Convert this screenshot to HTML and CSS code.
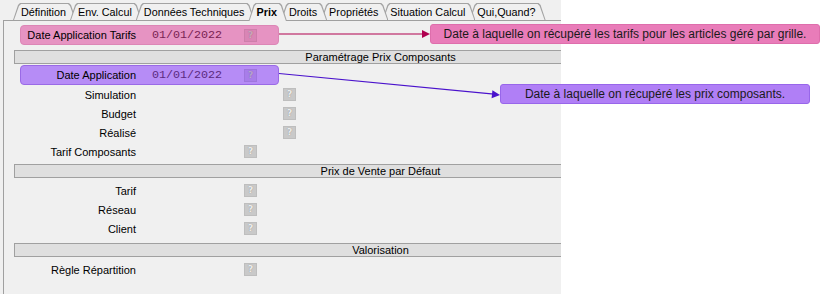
FILE: index.html
```html
<!DOCTYPE html>
<html lang="fr">
<head>
<meta charset="utf-8">
<title>Prix</title>
<link rel="stylesheet" href="styles.css">
</head>
<body>
<div class="screen">
  <div class="window">
    <div class="tabs">
      <div class="tab z1"><span>Définition</span></div>
      <div class="tab z2"><span>Env. Calcul</span></div>
      <div class="tab z3"><span>Données Techniques</span></div>
      <div class="tab active"><span>Prix</span></div>
      <div class="tab z8"><span>Droits</span></div>
      <div class="tab z7"><span>Propriétés</span></div>
      <div class="tab z6"><span>Situation Calcul</span></div>
      <div class="tab z5"><span>Qui,Quand?</span></div>
    </div>
    <div class="panel">
      <div class="row hl hl-pink gap-top4">
        <span class="lbl">Date Application Tarifs</span><span class="val">01/01/2022</span><span class="q">?</span>
      </div>
      <div class="section gap-top5">Paramétrage Prix Composants</div>
      <div class="row hl hl-purple gap-top1">
        <span class="lbl">Date Application</span><span class="val">01/01/2022</span><span class="q">?</span>
      </div>
      <div class="row"><span class="lbl">Simulation</span><span class="q far">?</span></div>
      <div class="row"><span class="lbl">Budget</span><span class="q far">?</span></div>
      <div class="row"><span class="lbl">Réalisé</span><span class="q far">?</span></div>
      <div class="row"><span class="lbl">Tarif Composants</span><span class="q near">?</span></div>
      <div class="section gap-top3">Prix de Vente par Défaut</div>
      <div class="row gap-top3"><span class="lbl">Tarif</span><span class="q near">?</span></div>
      <div class="row"><span class="lbl">Réseau</span><span class="q near">?</span></div>
      <div class="row"><span class="lbl">Client</span><span class="q near">?</span></div>
      <div class="section gap-top5">Valorisation</div>
      <div class="row gap-top3"><span class="lbl">Règle Répartition</span><span class="q near">?</span></div>
    </div>
  </div>

  <svg class="arrows" width="821" height="294" viewBox="0 0 821 294">
    <line x1="279" y1="34" x2="424" y2="34" stroke="#b0004f" stroke-width="1.2"/>
    <polygon points="422,30 430,34 422,38" fill="#b0004f"/>
    <line x1="279" y1="73.5" x2="494" y2="94.2" stroke="#4a12cc" stroke-width="1.2"/>
    <polygon points="492.4,90.2 500,95 491.6,98.2" fill="#4a12cc"/>
  </svg>

  <div class="callout callout-pink">Date à laquelle on récupéré les tarifs pour les articles géré par grille.</div>
  <div class="callout callout-purple">Date à laquelle on récupéré les prix composants.</div>
</div>
</body>
</html>
```
FILE: styles.css
```css
* { box-sizing: border-box; }

html, body {
  margin: 0;
  padding: 0;
  background: #ffffff;
}

.screen {
  position: relative;
  width: 821px;
  height: 294px;
  overflow: hidden;
  font-family: "Liberation Sans", Arial, sans-serif;
  font-size: 11px;
  color: #000;
}

.window {
  width: 561px;
  height: 294px;
  background: #f0f0f0;
  overflow: hidden;
  padding-top: 3px;
}

/* ---------- tabs ---------- */
.tabs {
  display: flex;
  height: 17px;
  padding-left: 13px;
  position: relative;
  z-index: 2;
  font-size: 10.8px;
}

.tab {
  position: relative;
  height: 17px;
  padding: 0 10px 0 8px;
  margin-left: -6px;
  display: flex;
  align-items: center;
  white-space: nowrap;
}
.tab:first-child { margin-left: 0; }

.tab::before,
.tab::after {
  content: "";
  position: absolute;
  clip-path: polygon(0 100%, 5px 2px, 7px 0, calc(100% - 7px) 0, calc(100% - 5px) 2px, 100% 100%);
}
.tab::before {
  inset: 0;
  background: #a3a3a3;
}
.tab::after {
  inset: 1px 1px 0 1px;
  background: #f0f0f0;
}
.tab span {
  position: relative;
  z-index: 1;
  padding-top: 1px;
}

.z1 { z-index: 1; }
.z2 { z-index: 2; }
.z3 { z-index: 3; }
.z5 { z-index: 5; }
.z6 { z-index: 6; }
.z7 { z-index: 7; }
.z8 { z-index: 8; }
.tab.active {
  z-index: 10;
  height: 18px;
  margin-bottom: -1px;
  font-weight: bold;
  padding-bottom: 1px;
}

/* ---------- panel ---------- */
.panel {
  position: relative;
  z-index: 1;
  margin-left: 3px;
  width: 760px;
  height: 274px;
  border-left: 1px solid #a0a0a0;
  border-top: 1px solid #a0a0a0;
}

.gap-top1 { margin-top: 1px; }
.gap-top3 { margin-top: 3px; }
.gap-top4 { margin-top: 4px; }
.gap-top5 { margin-top: 5px; }

.section {
  margin-left: 10px;
  width: 733px;
  height: 14px;
  line-height: 12px;
  background: #dfdfdf;
  border: 1px solid #a0a0a0;
  text-align: center;
}

.row {
  display: flex;
  align-items: center;
  height: 19px;
  margin-left: 16px;
}

.row.hl {
  width: 259px;
  height: 20px;
  border-radius: 4px;
}
.hl-pink {
  background: #e693c2;
  border: 1px solid #dc86b6;
}
.hl-purple {
  background: #b68cf6;
  border: 1px solid #9a6ae6;
}
.row.hl .lbl { width: 115px; }

.lbl {
  flex-shrink: 0;
  width: 116px;
  text-align: right;
  white-space: nowrap;
}

.val {
  flex-shrink: 0;
  margin-left: 16px;
  width: 72px;
  font-family: "Liberation Mono", "Courier New", monospace;
  font-size: 11.7px;
  color: #7a1f52;
}
.hl-purple .val { color: #5b2a80; }

.q {
  flex-shrink: 0;
  width: 13px;
  height: 13px;
  margin-left: 20px;
  background: rgba(0, 0, 0, 0.16);
  border: 1px solid rgba(0, 0, 0, 0.05);
  color: rgba(255, 255, 255, 0.85);
  font-family: "DejaVu Sans", sans-serif;
  font-weight: bold;
  font-size: 9px;
  line-height: 11px;
  text-align: center;
  text-shadow: 0 0 1px rgba(0, 0, 0, 0.35);
}
.hl .q {
  background: rgba(120, 30, 90, 0.12);
  color: rgba(255, 255, 255, 0.45);
}
.hl-purple .q {
  background: rgba(70, 20, 140, 0.12);
}
.q.near { margin-left: 108px; }
.q.far { margin-left: 147px; }

/* ---------- overlay annotations ---------- */
.arrows {
  position: absolute;
  left: 0;
  top: 0;
  z-index: 5;
}

.callout {
  position: absolute;
  z-index: 6;
  height: 20px;
  line-height: 18px;
  text-align: center;
  font-size: 12px;
  color: #1a1a1a;
  border-radius: 3px;
  white-space: nowrap;
}
.callout-pink {
  left: 430px;
  top: 24px;
  width: 390px;
  background: #e97cb9;
  border: 1px solid #de6eac;
}
.callout-purple {
  left: 500px;
  top: 84px;
  width: 310px;
  background: #b07ff6;
  border: 1px solid #9866ea;
}
```
